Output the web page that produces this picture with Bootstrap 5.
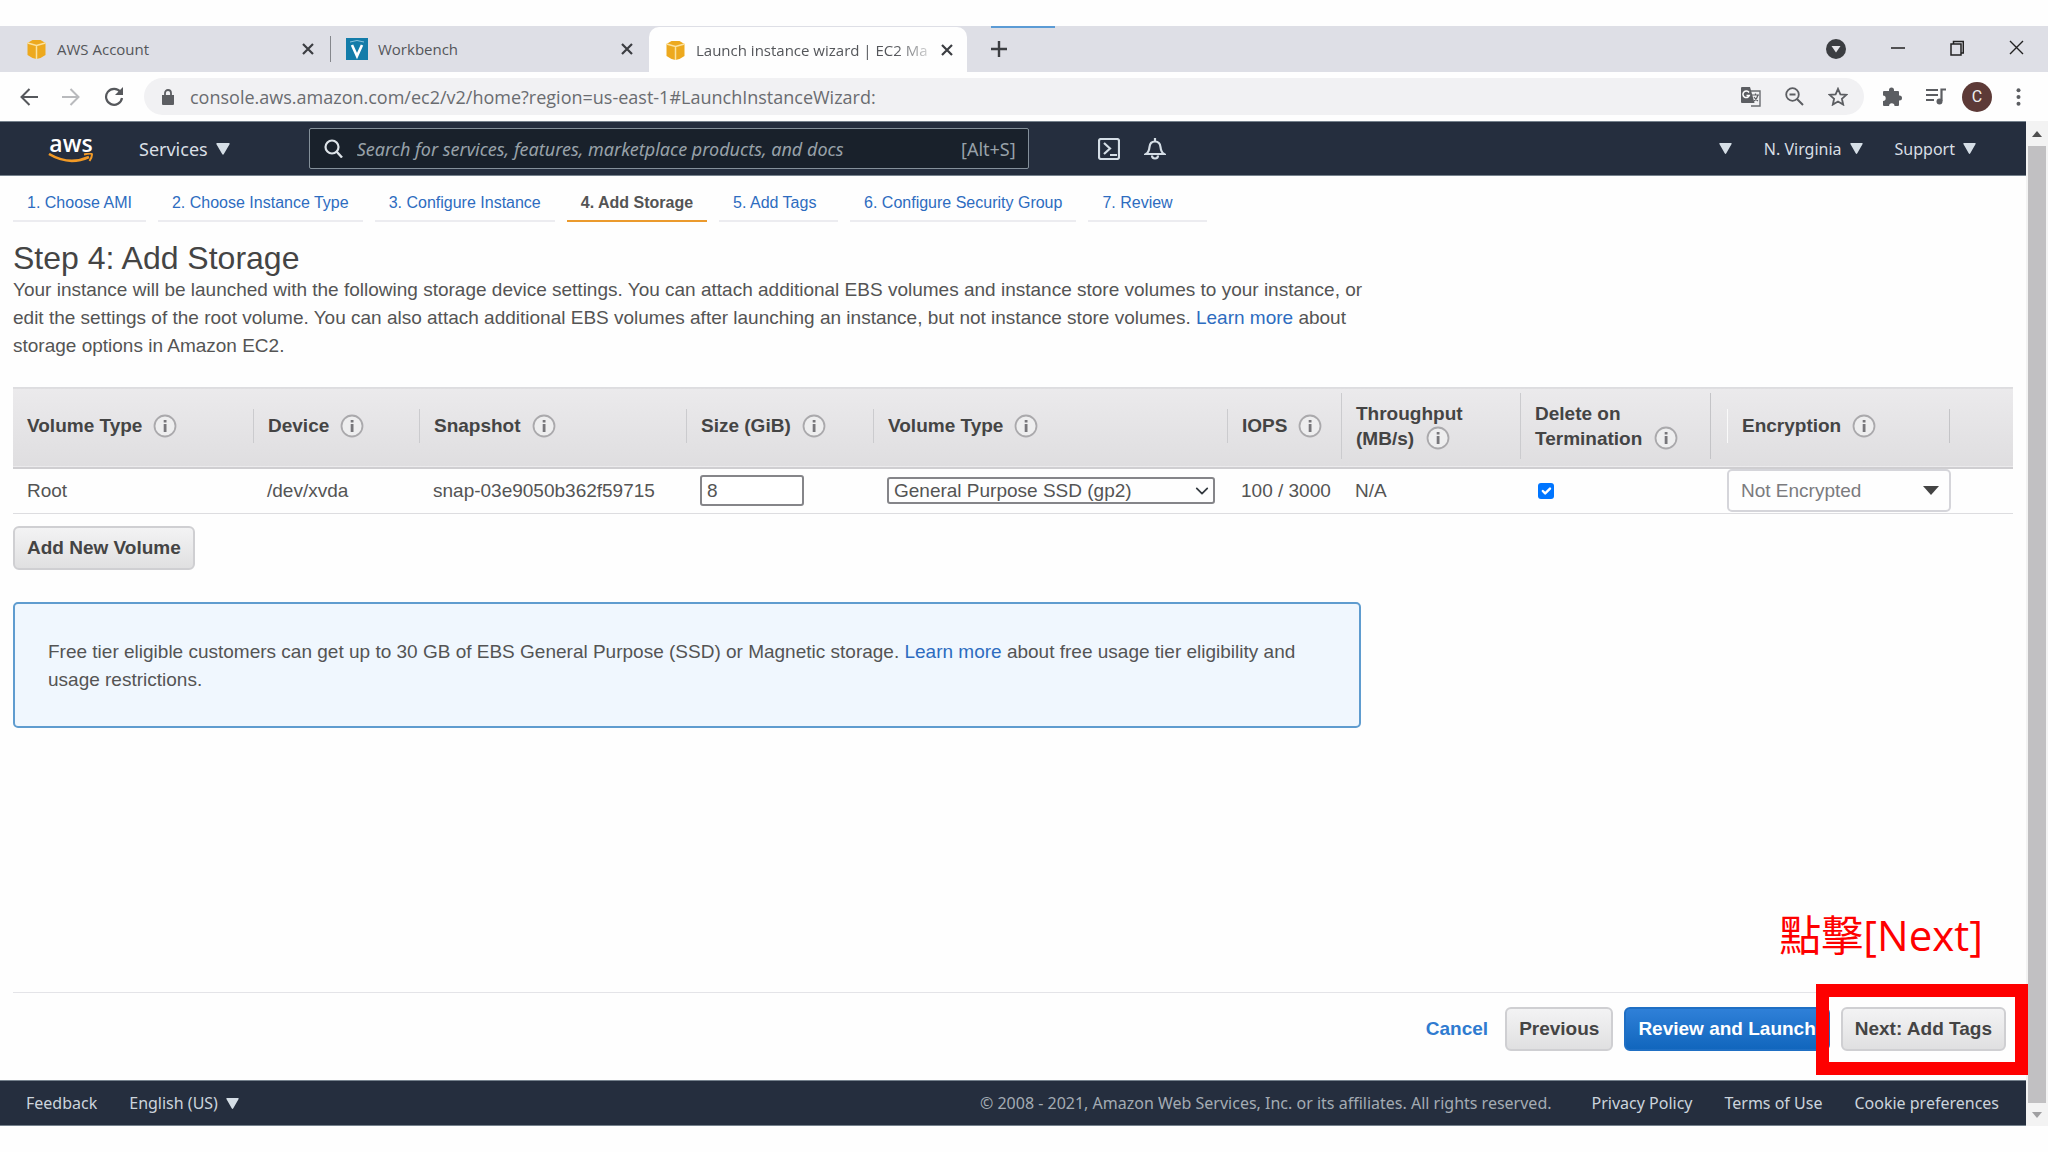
<!DOCTYPE html>
<html lang="en">
<head>
<meta charset="utf-8">
<meta name="viewport" content="width=device-width, initial-scale=1">
<title>Launch instance wizard | EC2 Management Console</title>
<link href="https://cdn.jsdelivr.net/npm/bootstrap@5.3.0/dist/css/bootstrap.min.css" rel="stylesheet">
<style>
  body { font-family: "Liberation Sans", Arial, sans-serif; font-size: 19px; line-height: 28px; color: #545454; background: #fefefe; min-height: 100vh; padding: 26px 0; }
  a { text-decoration: none; color: #2d6cc0; }
  button { font: inherit; color: inherit; }
  svg { display: block; flex: none; }
  .bare { background: none; border: 0; padding: 0; display: flex; align-items: center; justify-content: center; }
  .ui-sans { font-family: "Noto Sans", "Open Sans", sans-serif; }

  /* browser chrome */
  .tab-strip { height: 46px; background: #dedfe6; font-family: "Open Sans", sans-serif; font-size: 15px; color: #54565a; padding-right: 24px; }
  .browser-tab { width: 318px; padding-left: 26px; padding-right: 4px; gap: 10px; }
  .browser-tab .tab-title { white-space: nowrap; color: inherit; }
  .tab-rule { width: 1px; height: 26px; background: #85878c; }
  .browser-tab.next-tab { padding-left: 15px; padding-right: 16px; }
  .browser-tab.current { background: #fefefe; border-radius: 10px 10px 0 0; padding-left: 16px; padding-right: 14px; margin-top: 1px; }
  .current .tab-title { -webkit-mask-image: linear-gradient(90deg, #000 86%, rgba(0,0,0,.25)); mask-image: linear-gradient(90deg, #000 86%, rgba(0,0,0,.25)); }
  .load-line { position: absolute; top: 0; left: 24px; width: 64px; height: 2px; background: #5b9bd5; }
  .window-keys { gap: 45px; }
  .toolbar { height: 49px; padding: 0 27px 0 20px; color: #5c5e62; }
  .omnibox { height: 37px; border-radius: 19px; background: #f1f1f3; padding: 0 16px 0 18px; margin: 0 14px 0 20px; font-family: "Open Sans", sans-serif; font-size: 18px; }
  .omnibox input { background: none; border: 0; outline: 0; color: #6a6c70; padding: 0; min-width: 0; }
  .avatar { width: 30px; height: 30px; border-radius: 50%; background: #5d3a37; color: #eee; font-family: Roboto, sans-serif; font-size: 16px; }

  /* console header and footer */
  .console-nav { height: 55px; background: #252e3e; border-top: 1px solid #75818c; border-bottom: 1px solid #75818c; color: #d9dfe5; font-size: 16px; padding: 0 50px 0 48px; }
  .aws-logo { width: 46px; color: #fff; font-family: "Open Sans", sans-serif; font-weight: 600; font-size: 23px; line-height: 20px; }
  .svc { font-size: 18px; margin-left: 45px; gap: 8px; }
  .search-box { width: 720px; height: 41px; margin-left: 79px; border: 1px solid #84909a; border-radius: 2px; background: #19212b; padding: 0 12px 0 14px; font-size: 18px; color: #98a1a9; gap: 14px; }
  .search-box input { background: none; border: 0; outline: 0; font-style: italic; color: #98a1a9; padding: 0; min-width: 0; }
  .search-box input::placeholder { color: #98a1a9; opacity: 1; }
  .shell-key { margin-left: 69px; }
  .console-foot { height: 46px; background: #252e3e; border-top: 1px solid #75818c; border-bottom: 1px solid #75818c; font-size: 16px; padding: 0 27px 0 26px; color: #a3abb3; }
  .console-foot a, .console-foot button { color: #ccd4dc; }

  /* wizard */
  .steps { gap: 12px; padding: 0 13px; font-size: 16px; }
  .steps a { padding: 13px 14px 4px; border-bottom: 2px solid #ececf0; line-height: 27px; }
  .steps a.now { font-weight: 700; color: #545454; border-color: #eb9a2d; }
  .steps a.short { min-width: 119px; }
  .wizard { padding: 0 13px; }
  .wizard h1 { font-size: 32px; line-height: 36px; font-weight: 400; color: #444; margin: 18px 0 0; }
  .intro { max-width: 1360px; margin: 0 0 27px; }
  .volumes { table-layout: fixed; width: 100%; border-collapse: collapse; }
  .volumes thead tr { height: 80px; background: linear-gradient(#ebeaec, #dfdee0); border-top: 1px solid #dddde0; border-bottom: 2px solid #cfced1; }
  .volumes th { padding: 0 0 3px; font-weight: 700; color: #444; line-height: 25px; }
  .volumes td { padding: 0 0 0 14px; height: 46px; border-bottom: 1px solid #dddde0; white-space: nowrap; }
  .th-in { display: flex; align-items: center; gap: 11px; min-height: 34px; padding-left: 14px; border-left: 1px solid #cbcbce; }
  .th-tall { min-height: 66px; align-items: flex-end; padding-bottom: 8px; }
  .th-in.rule-end { border-right: 1px solid #c4c4c7; }
  .enc-head { width: 78%; border-left-color: #fafafa; }
  .th-in svg { width: 24px; height: 24px; }
  .size-box { width: 104px; height: 31px; border: 2px solid #858589; border-radius: 3px; padding: 0 5px; color: #545454; }
  .type-box { width: 328px; height: 27px; border: 2px solid #858589; border-radius: 3px; padding: 0 24px 0 5px; font-size: 19px; line-height: 23px; color: #545454; background-color: #fefefe; background-position: right 4px center; background-size: 14px 14px; }
  .enc-box { display: block; width: 224px; height: 43px; border: 2px solid #d5d5da; border-radius: 5px; padding: 0 30px 0 12px; color: #7b7b7e; appearance: none; background: #fefefe url("data:image/svg+xml,%3Csvg xmlns='http://www.w3.org/2000/svg' viewBox='0 0 16 9'%3E%3Cpath d='M0 0h16L8 9z' fill='%23444'/%3E%3C/svg%3E") no-repeat right 10px center / 16px 9px; }
  .volumes td.enc-cell { padding-left: 0; }
  .tick-box.form-check-input { display: block; width: 16px; height: 16px; margin: 0 0 0 4px; border-radius: 3px; border: 0; }
  .tick-box:checked { background-color: #0075ff; }
  .con-btn { height: 44px; border: 2px solid #cfcfd2; border-radius: 6px; background: linear-gradient(#f3f3f4, #e0e0e1); color: #444; font-size: 19px; font-weight: 700; padding: 0 12px; }
  .con-btn.go { background: linear-gradient(#2f80d8, #1166bd); border-color: #1f6fc4; color: #fff; }
  .add-volume { display: block; margin-top: 12px; }
  .note { max-width: 1348px; margin-top: 32px; padding: 34px 50px 32px 33px; border: 2px solid #5f9ccf; border-radius: 5px; background: #f0f7fe; }
  .actions { height: 88px; border-top: 1px solid #e4e4e8; padding: 14px 20px 0 0; margin-left: 13px; gap: 11px; position: relative; }
  .cancel { font-weight: 700; line-height: 44px; margin-right: 6px; color: #2f7bd0; }
  .focus-frame { position: absolute; right: -2px; top: -9px; width: 212px; height: 91px; border: 13px solid #fe0000; z-index: 2; }
  .callout { position: absolute; right: 43px; bottom: 115px; font-family: "Open Sans", "Noto Sans CJK TC", sans-serif; font-size: 42px; line-height: 60px; color: #fe0000; white-space: nowrap; }
  .scroll-rail { width: 22px; background: #f3f3f3; padding: 9px 2px 7px; }
  .scroll-thumb { width: 18px; background: #c1c0c2; }
</style>
<script src="https://cdn.jsdelivr.net/npm/bootstrap@5.3.0/dist/js/bootstrap.bundle.min.js"></script>
</head>
<body class="d-flex flex-column">
<svg width="0" height="0" class="position-absolute" aria-hidden="true">
  <symbol id="cube" viewBox="0 0 20 20"><path d="M1 4 6 1h8l5 3v12l-5 3-4 1-4-1-5-3z" fill="#eda91e"/><path d="M1 4l9 2.500 9-2.500M10 6.500V20" stroke="#fbe2a0" stroke-width="1.500" fill="none"/></symbol>
  <symbol id="ex" viewBox="0 0 12 12"><path d="M1 1l10 10M11 1 1 11" stroke="#3c3e42" stroke-width="2.200"/></symbol>
  <symbol id="down" viewBox="0 0 13 11"><path d="M1 0h11q1 0 .6 1L7.300 10.200q-.8 1.400-1.600 0L.4 1Q0 0 1 0z" fill="#d5dee6"/></symbol>
  <symbol id="info" viewBox="0 0 24 24"><circle cx="12" cy="12" r="10.500" fill="#eeeeef" stroke="#aaa9ac" stroke-width="1.800"/><path d="M10.700 6h2.800v2.400h-2.800zM10.700 10h2.800v8h-2.800z" fill="#77767a"/></symbol>
</svg>

<header>
  <div class="tab-strip d-flex">
    <div class="browser-tab d-flex align-items-center">
      <svg width="21" height="20"><use href="#cube"/></svg><a href="#" class="tab-title flex-grow-1">AWS Account</a>
      <button class="bare" aria-label="Close tab"><svg width="12" height="12"><use href="#ex"/></svg></button>
    </div>
    <div class="d-flex align-items-center ps-2 ms-1"><span class="tab-rule"></span></div>
    <div class="browser-tab next-tab d-flex align-items-center">
      <svg width="22" height="22" viewBox="0 0 22 22"><path d="M0 0h22v22H0z" fill="#137ca9"/><path d="M4 4q7-3 14 0" stroke="#8ac2dc" fill="none"/><path d="M6 7l5 11 5-11" stroke="#fff" stroke-width="2.600" fill="none"/></svg><a href="#" class="tab-title flex-grow-1">Workbench</a>
      <button class="bare" aria-label="Close tab"><svg width="12" height="12"><use href="#ex"/></svg></button>
    </div>
    <div class="browser-tab current d-flex align-items-center">
      <svg width="21" height="20"><use href="#cube"/></svg><a href="#" class="tab-title">Launch instance wizard | EC2 Ma</a>
      <button class="bare ms-auto" aria-label="Close tab"><svg width="12" height="12"><use href="#ex"/></svg></button>
    </div>
    <div class="position-relative d-flex align-items-center flex-grow-1 ps-4">
      <span class="load-line"></span>
      <button class="bare" aria-label="New tab"><svg width="16" height="16" viewBox="0 0 16 16"><path d="M8 0v16M0 8h16" stroke="#3c3e42" stroke-width="2.400"/></svg></button>
    </div>
    <div class="window-keys d-flex align-items-center">
      <button class="bare" aria-label="Tab search"><svg width="20" height="20" viewBox="0 0 20 20"><circle cx="10" cy="10" r="10" fill="#3b3d41"/><path d="M5.500 7h9L10 13.500z" fill="#e6e6ea"/></svg></button>
      <button class="bare" aria-label="Minimize"><svg width="14" height="12" viewBox="0 0 14 12"><path d="M0 5h14" stroke="#222" stroke-width="1.500"/></svg></button>
      <button class="bare" aria-label="Restore"><svg width="14" height="18" viewBox="0 0 14 18"><path d="M1 4h10v11H1zM3.500 4V1.500H13.300V13H11" stroke="#222" stroke-width="1.500" fill="none"/></svg></button>
      <button class="bare" aria-label="Close"><svg width="15" height="18" viewBox="0 0 15 18"><path d="M1 1l13 13M14 1 1 14" stroke="#222" stroke-width="1.400"/></svg></button>
    </div>
  </div>
  <div class="toolbar d-flex align-items-center">
    <button class="bare" aria-label="Back"><svg width="18" height="18" viewBox="0 0 18 18"><path d="M18 9H2M9.500 1 1.500 9l8 8" stroke="#56585c" stroke-width="2" fill="none"/></svg></button>
    <button class="bare ms-4" aria-label="Forward"><svg width="18" height="18" viewBox="0 0 18 18"><path d="M0 9h16M8.500 1l8 8-8 8" stroke="#b9babd" stroke-width="2" fill="none"/></svg></button>
    <button class="bare ms-4" aria-label="Reload"><svg width="20" height="19" viewBox="0 0 20 19"><path d="M16.500 5A8 8 0 1 0 18 11" stroke="#56585c" stroke-width="2.200" fill="none"/><path d="M19 0v8h-8z" fill="#56585c"/></svg></button>
    <div class="omnibox d-flex align-items-center flex-grow-1">
      <svg width="12" height="16" viewBox="0 0 12 16"><path d="M0 6h12v9q0 1-1 1H1q-1 0-1-1z" fill="#5c5e62"/><path d="M3 7V4a3 3 0 0 1 6 0v3" stroke="#5c5e62" stroke-width="1.800" fill="none"/></svg>
      <input class="flex-grow-1 ms-3" aria-label="Address" value="console.aws.amazon.com/ec2/v2/home?region=us-east-1#LaunchInstanceWizard:">
      <button class="bare" aria-label="Translate"><svg width="20" height="20" viewBox="0 0 20 20"><path d="M7 4h12v15H10" fill="#f1f1f3" stroke="#6a6c70" stroke-width="1.400"/><path d="M1 0h8l4.500 16H1q-1 0-1-1V1q0-1 1-1z" fill="#5c5e62"/><path d="M8 5.500A3.300 3.300 0 1 0 8.300 8.500H5.500" stroke="#fff" stroke-width="1.500" fill="none"/><path d="M11 8h7M14.500 6.500V8M17 8q-1 4-4 6M13 10q2 3 4 4" stroke="#5c5e62" stroke-width="1.200" fill="none"/></svg></button>
      <button class="bare ms-4" aria-label="Zoom"><svg width="19" height="19" viewBox="0 0 19 19"><circle cx="7.500" cy="7.500" r="6.300" fill="none" stroke="#5c5e62" stroke-width="1.800"/><path d="M4.500 7.500h6M12 12l6 6" stroke="#5c5e62" stroke-width="2"/></svg></button>
      <button class="bare ms-4" aria-label="Bookmark"><svg width="20" height="19" viewBox="0 0 20 19"><path d="M10 1.800l2.400 5.500 6 .5-4.500 4 1.300 5.800L10 14.500l-5.200 3.100 1.300-5.800-4.500-4 6-.5z" fill="none" stroke="#5c5e62" stroke-width="1.800"/></svg></button>
    </div>
    <button class="bare ms-1" aria-label="Extensions"><svg width="20" height="20" viewBox="0 0 20 20"><path d="M7 3a2.500 2.500 0 0 1 5 0v1h4q1 0 1 1v3.500h.5a2.500 2.500 0 0 1 0 5H17V18q0 1-1 1h-3.500a2.700 2.700 0 0 0-5.400 0H2q-1 0-1-1v-4a2.700 2.700 0 0 0 0-5.400V5q0-1 1-1h5z" fill="#5c5e62"/></svg></button>
    <button class="bare ms-4 me-3" aria-label="Media"><svg width="20" height="17" viewBox="0 0 20 17"><path d="M0 2h12M0 7h12M0 12h8" stroke="#5c5e62" stroke-width="2"/><path d="M15.500 13V1.500H20" stroke="#5c5e62" stroke-width="2.200" fill="none"/><circle cx="13.500" cy="13.500" r="3" fill="#5c5e62"/></svg></button>
    <button class="bare avatar me-4" aria-label="Profile">C</button>
    <button class="bare" aria-label="Menu"><svg width="5" height="18" viewBox="0 0 5 18"><g fill="#5c5e62"><circle cx="2.500" cy="2.200" r="2"/><circle cx="2.500" cy="9" r="2"/><circle cx="2.500" cy="15.800" r="2"/></g></svg></button>
  </div>
</header>

<div class="d-flex flex-grow-1">
  <div class="d-flex flex-column flex-grow-1">
    <nav class="console-nav ui-sans d-flex align-items-center">
      <a href="#" class="aws-logo text-center" aria-label="AWS home">aws<svg width="46" height="11" viewBox="0 0 46 11"><path d="M1 1q20 12 40 3" stroke="#f29a26" stroke-width="2.600" fill="none"/><path d="M36 1.500q8-2 8 0 0 3-2.500 6.500" stroke="#f29a26" stroke-width="2" fill="none"/></svg></a>
      <button class="bare svc">Services <svg width="14" height="12"><use href="#down"/></svg></button>
      <div class="search-box d-flex align-items-center">
        <svg width="19" height="19" viewBox="0 0 19 19"><circle cx="8" cy="8" r="6.500" fill="none" stroke="#dde3e8" stroke-width="2.200"/><path d="M12.500 12.500l5.500 6" stroke="#dde3e8" stroke-width="2.400"/></svg>
        <input class="flex-grow-1" aria-label="Search" placeholder="Search for services, features, marketplace products, and docs">
        <span>[Alt+S]</span>
      </div>
      <button class="bare shell-key" aria-label="CloudShell"><svg width="22" height="22" viewBox="0 0 22 22"><rect x="1" y="1" width="20" height="20" rx="2" fill="none" stroke="#d5dee6" stroke-width="2.200"/><path d="M6 5l6 5.500L6 16M12 17h7" fill="none" stroke="#d5dee6" stroke-width="2.200"/></svg></button>
      <button class="bare ms-4" aria-label="Notifications"><svg width="22" height="22" viewBox="0 0 22 22"><path d="M11 0v3M2 16q3-2 3.500-7Q6 3.500 11 3.500T16.500 9q.5 5 3.500 7zM8 17.500q0 3 3 3t3-3" fill="none" stroke="#d5dee6" stroke-width="2.200"/></svg></button>
      <button class="bare ms-auto" aria-label="Account"><svg width="13" height="11"><use href="#down"/></svg></button>
      <button class="bare ms-4 ps-2 gap-2">N. Virginia <svg width="13" height="11"><use href="#down"/></svg></button>
      <button class="bare ms-4 ps-2 gap-2">Support <svg width="13" height="11"><use href="#down"/></svg></button>
    </nav>

    <nav class="steps d-flex" aria-label="Wizard steps">
      <a href="#">1. Choose AMI</a><a href="#">2. Choose Instance Type</a><a href="#">3. Configure Instance</a><a href="#" class="now">4. Add Storage</a><a href="#" class="short">5. Add Tags</a><a href="#">6. Configure Security Group</a><a href="#" class="short">7. Review</a>
    </nav>

    <main class="wizard flex-grow-1">
      <h1>Step 4: Add Storage</h1>
      <p class="intro">Your instance will be launched with the following storage device settings. You can attach additional EBS volumes and instance store volumes to your instance, or edit the settings of the root volume. You can also attach additional EBS volumes after launching an instance, but not instance store volumes. <a href="#">Learn more</a> about storage options in Amazon EC2.</p>
      <table class="volumes">
        <colgroup><col style="width:12%"><col style="width:8.3%"><col style="width:13.35%"><col style="width:9.35%"><col style="width:17.7%"><col style="width:5.7%"><col style="width:8.95%"><col style="width:10.35%"><col style="width:14.3%"></colgroup>
        <thead><tr>
          <th><div class="th-in border-0">Volume Type <svg><use href="#info"/></svg></div></th>
          <th><div class="th-in">Device <svg><use href="#info"/></svg></div></th>
          <th><div class="th-in">Snapshot <svg><use href="#info"/></svg></div></th>
          <th><div class="th-in">Size (GiB) <svg><use href="#info"/></svg></div></th>
          <th><div class="th-in">Volume Type <svg><use href="#info"/></svg></div></th>
          <th><div class="th-in">IOPS <svg><use href="#info"/></svg></div></th>
          <th><div class="th-in th-tall"><span>Throughput<span class="d-flex align-items-center gap-2">(MB/s) <svg class="ms-1"><use href="#info"/></svg></span></span></div></th>
          <th><div class="th-in th-tall rule-end me-3"><span>Delete on<span class="d-flex align-items-center gap-2">Termination <svg class="ms-1"><use href="#info"/></svg></span></span></div></th>
          <th><div class="th-in enc-head rule-end">Encryption <svg><use href="#info"/></svg></div></th>
        </tr></thead>
        <tbody><tr>
          <td>Root</td><td>/dev/xvda</td><td>snap-03e9050b362f59715</td>
          <td><input class="size-box d-block" aria-label="Size (GiB)" value="8"></td>
          <td><select class="form-select type-box" aria-label="Volume Type"><option>General Purpose SSD (gp2)</option></select></td>
          <td>100 / 3000</td><td>N/A</td>
          <td><input type="checkbox" class="form-check-input tick-box" aria-label="Delete on Termination" checked></td>
          <td class="enc-cell"><select class="enc-box" aria-label="Encryption"><option>Not Encrypted</option></select></td>
        </tr></tbody>
      </table>
      <button class="con-btn add-volume">Add New Volume</button>
      <div class="note">Free tier eligible customers can get up to 30 GB of EBS General Purpose (SSD) or Magnetic storage. <a href="#">Learn more</a> about free usage tier eligibility and usage restrictions.</div>
    </main>

    <div class="actions d-flex align-items-start justify-content-end">
      <a href="#" class="cancel">Cancel</a>
      <button class="con-btn">Previous</button>
      <button class="con-btn go">Review and Launch</button>
      <button class="con-btn">Next: Add Tags</button>
      <div class="focus-frame"></div>
      <div class="callout" lang="zh-Hant">點擊[Next]</div>
    </div>

    <footer class="console-foot ui-sans d-flex align-items-center">
      <a href="#">Feedback</a>
      <button class="bare gap-2 ms-4 ps-2">English (US) <svg width="13" height="11"><use href="#down"/></svg></button>
      <span class="ms-auto">© 2008 - 2021, Amazon Web Services, Inc. or its affiliates. All rights reserved.</span>
      <a href="#" class="ms-4 ps-3">Privacy Policy</a><a href="#" class="ms-4 ps-2">Terms of Use</a><a href="#" class="ms-4 ps-2">Cookie preferences</a>
    </footer>
  </div>
  <div class="scroll-rail d-flex flex-column align-items-center gap-2" aria-hidden="true">
    <svg width="10" height="8" viewBox="0 0 10 8"><path d="M0 7l5-6 5 6z" fill="#505050"/></svg>
    <div class="scroll-thumb flex-grow-1"></div>
    <svg width="10" height="8" viewBox="0 0 10 8"><path d="M0 1l5 6 5-6z" fill="#a0a0a2"/></svg>
  </div>
</div>
</body>
</html>
